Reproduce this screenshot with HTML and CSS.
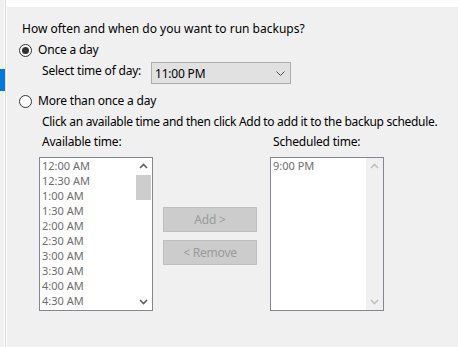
FILE: index.html
```html
<!DOCTYPE html>
<html>
<head>
<meta charset="utf-8">
<link rel="stylesheet" href="styles.css">
</head>
<body>
<div class="window">
  <div class="nav"><div class="nav-sel"></div></div>
  <div class="sep"></div>
  <div class="main">
    <div class="panel">
      <p class="q">How often and when do you want to run backups?</p>
      <div class="radio-row"><span class="radio checked"></span><span>Once a day</span></div>
      <div class="time-row">
        <span class="time-label">Select time of day:</span>
        <div class="select">
          <span>11:00 PM</span>
          <svg class="chev" width="9" height="5" viewBox="0 0 9 5"><polyline points="0.5,0.5 4.5,4.5 8.5,0.5" fill="none" stroke="#505050" stroke-width="1"/></svg>
        </div>
      </div>
      <div class="radio-row r2"><span class="radio"></span><span>More than once a day</span></div>
      <p class="hint">Click an available time and then click Add to add it to the backup schedule.</p>
      <div class="lists">
        <div class="col">
          <div class="col-label">Available time:</div>
          <div class="listbox">
            <ul class="items">
              <li>12:00 AM</li><li>12:30 AM</li><li>1:00 AM</li><li>1:30 AM</li><li>2:00 AM</li>
              <li>2:30 AM</li><li>3:00 AM</li><li>3:30 AM</li><li>4:00 AM</li><li>4:30 AM</li>
            </ul>
            <div class="sbar">
              <svg class="arrow" width="17" height="17" viewBox="0 0 17 17"><polyline points="5,10 8.5,6.5 12,10" fill="none" stroke="#606060" stroke-width="1.6"/></svg>
              <div class="track"><div class="thumb"></div></div>
              <svg class="arrow" width="17" height="17" viewBox="0 0 17 17"><polyline points="5,7 8.5,10.5 12,7" fill="none" stroke="#606060" stroke-width="1.6"/></svg>
            </div>
          </div>
        </div>
        <div class="buttons">
          <div class="btn">Add &gt;</div>
          <div class="btn">&lt; Remove</div>
        </div>
        <div class="col">
          <div class="col-label">Scheduled time:</div>
          <div class="listbox">
            <ul class="items"><li>9:00 PM</li></ul>
            <div class="sbar disabled">
              <svg class="arrow" width="17" height="17" viewBox="0 0 17 17"><polyline points="5,10 8.5,6.5 12,10" fill="none" stroke="#c0c0c0" stroke-width="1.6"/></svg>
              <div class="track"></div>
              <svg class="arrow" width="17" height="17" viewBox="0 0 17 17"><polyline points="5,7 8.5,10.5 12,7" fill="none" stroke="#c0c0c0" stroke-width="1.6"/></svg>
            </div>
          </div>
        </div>
      </div>
    </div>
  </div>
</div>
</body>
</html>
```
FILE: styles.css
```css
* { box-sizing: border-box; margin: 0; padding: 0; }
html, body { margin: 0; background: #fff; }
body {
  width: 458px;
  height: 347px;
  overflow: hidden;
  font-family: "Noto Sans", sans-serif;
  font-size: 12px;
  letter-spacing: -0.2px;
  color: #000;
}
.window { display: flex; height: 347px; }
.nav { width: 5px; background: linear-gradient(to right, #f0f0f0 4px, #fff 4px); }
.nav-sel { margin-top: 69px; height: 22px; background: #0078d7; }
.sep { width: 2px; background: linear-gradient(to right, #dadada 1px, #fff 1px); }
.main { flex: 1; padding-top: 7px; background: #fff; display: flex; }
.panel { flex: 1; background: #f0f0f0; padding-left: 12px; white-space: nowrap; }

.q { line-height: 20px; margin-top: 12px; margin-left: 3px; letter-spacing: 0; }
.radio-row { display: flex; align-items: center; height: 20px; line-height: 20px; margin-top: 1px; gap: 6px; }
.radio-row.r2 { margin-top: 7px; }
.radio {
  width: 13px; height: 13px; border: 1px solid #333; border-radius: 50%;
  background: #fff; display: flex; align-items: center; justify-content: center;
}
.radio.checked::after { content: ""; width: 7px; height: 7px; border-radius: 50%; background: #333; }

.time-row { display: flex; margin-left: 23px; height: 22px; margin-top: 2px; }
.time-label { line-height: 18px; width: 109px; }
.select {
  width: 140px; height: 22px; background: #e1e1e1; border: 1px solid #adadad;
  display: flex; align-items: center; justify-content: space-between;
  padding: 0 5px 0 3px; line-height: 20px;
}
.select span { position: relative; top: 1px; }
.chev { display: block; }

.hint { line-height: 20px; margin-left: 23px; margin-top: 1px; letter-spacing: -0.3px; }

.lists { display: flex; margin-left: 20px; align-items: flex-start; }
.col { width: 114px; flex: none; }
.col-label { line-height: 20px; padding-left: 3px; margin-bottom: 5px; }
.listbox { width: 114px; height: 154px; border: 1px solid #828790; background: #fff; display: flex; }
.items { list-style: none; flex: 1; padding-left: 2px; color: #6d6d6d; font-size: 11px; letter-spacing: 0; }
.items li { line-height: 15px; height: 15px; }
.sbar { width: 17px; display: flex; flex-direction: column; background: #fff; }
.sbar.disabled { background: #f0f0f0; }
.arrow { display: block; flex: none; }
.track { flex: 1; padding: 0 1px; }
.thumb { height: 25px; background: #cdcdcd; }

.buttons { display: flex; flex-direction: column; gap: 8px; margin-left: 10px; margin-right: 13px; margin-top: 75px; width: 94px; flex: none; }
.btn {
  height: 25px; background: #cccccc; border: 1px solid #bfbfbf; color: #9a9a9a;
  display: flex; align-items: center; justify-content: center; line-height: 20px;
}
```
